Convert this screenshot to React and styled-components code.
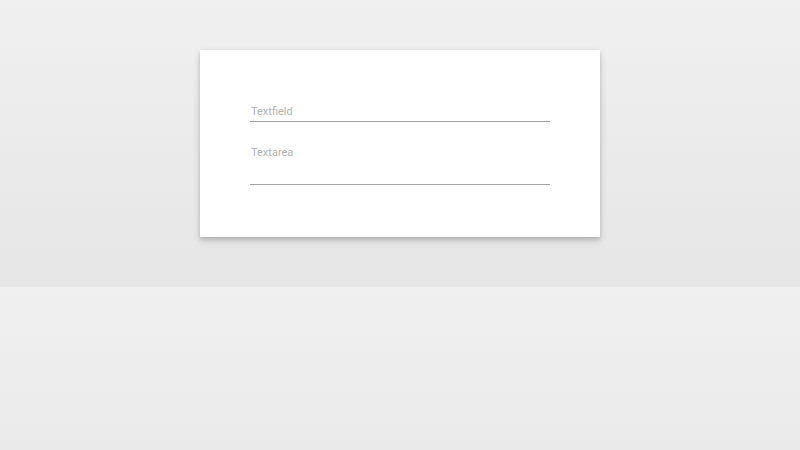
import React from 'react';
import styled, { createGlobalStyle } from 'styled-components';

const GlobalStyle = createGlobalStyle`
  html, body {
    margin: 0;
  }
  body {
    padding: 50px 0;
    font-family: Roboto, "Liberation Sans", sans-serif;
    background: linear-gradient(#f0f0f0, #e6e6e6);
  }
`;

const Card = styled.div`
  width: 300px;
  margin: 0 auto;
  padding: 50px 50px 52px;
  background: #fff;
  box-shadow: 0 4px 8px rgba(0, 0, 0, 0.14), 0 2px 4px rgba(0, 0, 0, 0.14);
`;

const Field = styled.div`
  margin-bottom: ${p => p.$last ? 0 : '20px'};
`;

const fieldStyles = `
  display: block;
  width: 100%;
  box-sizing: border-box;
  border: none;
  border-bottom: 1px solid #a3a3a3;
  outline: none;
  background: transparent;
  font-family: Roboto, "Liberation Sans", sans-serif;
  font-size: 11px;
  color: #333;
  padding: 4px 1px;
  &::placeholder {
    color: #b3b3b3;
  }
`;

const Input = styled.input`
  ${fieldStyles}
  height: 22px;
  padding-top: 5px;
`;

const TextArea = styled.textarea`
  ${fieldStyles}
  height: 43px;
  resize: none;
`;

export default function App() {
  return (
    <>
      <GlobalStyle />
      <Card>
        <Field>
          <Input type="text" placeholder="Textfield" />
        </Field>
        <Field $last>
          <TextArea placeholder="Textarea" />
        </Field>
      </Card>
    </>
  );
}
